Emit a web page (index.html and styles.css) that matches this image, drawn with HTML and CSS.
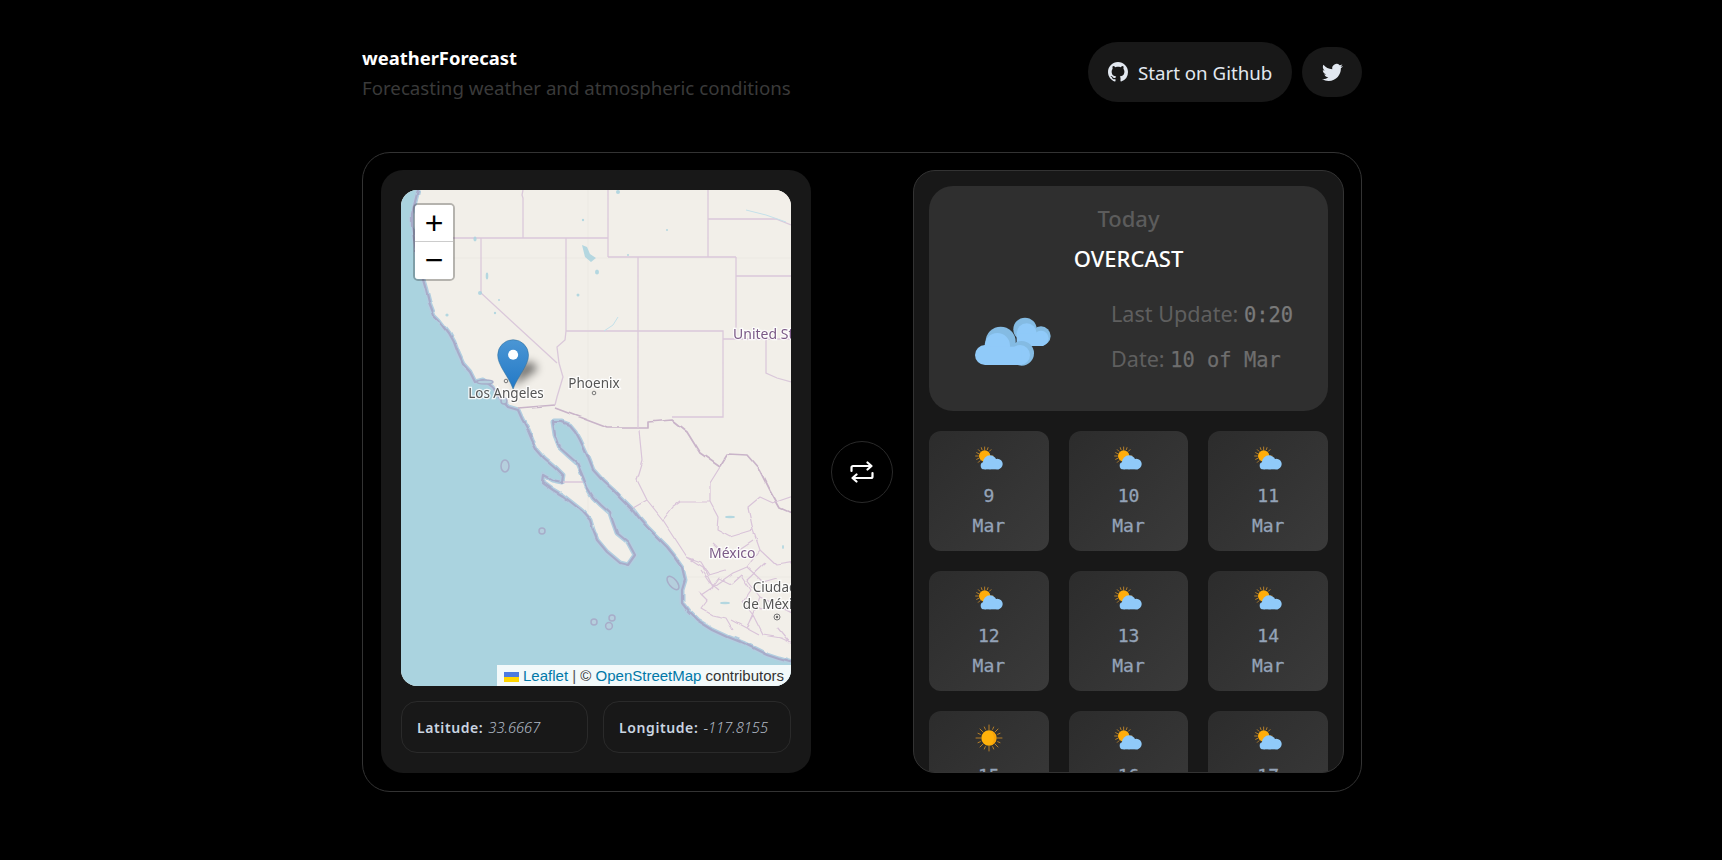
FILE: index.html
```html
<!DOCTYPE html>
<html lang="en">
<head>
<meta charset="utf-8">
<title>weatherForecast</title>
<link rel="stylesheet" href="styles.css">
</head>
<body>
<svg class="defs" width="0" height="0" aria-hidden="true">
  <defs>
    <symbol id="partly" viewBox="193 80 84 72">
      <g stroke="#f9a825" stroke-width="2" stroke-linecap="round">
        <path d="M222 83v8M222 129v8M195 110h8M241 110h6M203 91l5 5M236 124l5 5M241 91l-5 5M203 129l5-5M212 85l2 6M232 85l-2 6M198 100l6 3M198 120l6-3"/>
      </g>
      <circle cx="222" cy="110" r="17" fill="#ffad0a"/>
      <g fill="#90caf9">
        <circle cx="238" cy="129" r="21"/>
        <circle cx="260" cy="134" r="16"/>
        <circle cx="221" cy="139" r="11"/>
        <rect x="221" y="128" width="44" height="22"/>
      </g>
    </symbol>
    <symbol id="sun" viewBox="193 103 84 84">
      <g stroke="#f9a825" stroke-width="2" stroke-linecap="round">
        <path d="M235 106v14M235 170v14M196 145h14M260 145h14M208 118l8 8M254 164l8 8M262 118l-8 8M208 172l8-8M221 112l3 7M249 112l-3 7M221 178l3-7M249 178l-3-7M202 131l7 3M268 131l-7 3M202 159l7-3M268 159l-7-3"/>
      </g>
      <circle cx="235" cy="145" r="23" fill="#ffb10a"/>
      <path d="M240 123a23 23 0 0 1 0 44a30 30 0 0 0 0-44z" fill="#f7a30a"/>
    </symbol>
    <filter id="rough" x="-5%" y="-5%" width="110%" height="110%">
      <feTurbulence type="fractalNoise" baseFrequency="0.06" numOctaves="2" seed="4" result="n"/>
      <feDisplacementMap in="SourceGraphic" in2="n" scale="3.5" xChannelSelector="R" yChannelSelector="G"/>
    </filter>
  </defs>
</svg>

<div class="page">
  <header class="top">
    <div class="brand">
      <h1 class="brand-title">weatherForecast</h1>
      <p class="brand-sub">Forecasting weather and atmospheric conditions</p>
    </div>
    <div class="actions">
      <a class="btn btn-github">
        <svg class="gh-icon" viewBox="0 0 16 16"><path fill="currentColor" d="M8 0C3.58 0 0 3.58 0 8c0 3.54 2.29 6.53 5.47 7.59.4.07.55-.17.55-.38 0-.19-.01-.82-.01-1.49-2.01.37-2.53-.49-2.69-.94-.09-.23-.48-.94-.82-1.13-.28-.15-.68-.52-.01-.53.63-.01 1.08.58 1.23.82.72 1.21 1.87.87 2.33.66.07-.52.28-.87.51-1.07-1.78-.2-3.64-.89-3.64-3.95 0-.87.31-1.59.82-2.15-.08-.2-.36-1.02.08-2.12 0 0 .67-.21 2.2.82.64-.18 1.32-.27 2-.27.68 0 1.36.09 2 .27 1.53-1.04 2.2-.82 2.2-.82.44 1.1.16 1.92.08 2.12.51.56.82 1.27.82 2.15 0 3.07-1.87 3.75-3.65 3.95.29.25.54.73.54 1.48 0 1.07-.01 1.93-.01 2.2 0 .21.15.46.55.38A8.013 8.013 0 0016 8c0-4.42-3.58-8-8-8z"/></svg>
        <span>Start on Github</span>
      </a>
      <a class="btn btn-twitter">
        <svg class="tw-icon" viewBox="0 0 24 24"><path fill="currentColor" d="M23.953 4.57a10 10 0 01-2.825.775 4.958 4.958 0 002.163-2.723c-.951.555-2.005.959-3.127 1.184a4.92 4.92 0 00-8.384 4.482C7.69 8.095 4.067 6.13 1.64 3.162a4.822 4.822 0 00-.666 2.475c0 1.71.87 3.213 2.188 4.096a4.904 4.904 0 01-2.228-.616v.06a4.923 4.923 0 003.946 4.827 4.996 4.996 0 01-2.212.085 4.936 4.936 0 004.604 3.417 9.867 9.867 0 01-6.102 2.105c-.39 0-.779-.023-1.17-.067a13.995 13.995 0 007.557 2.209c9.053 0 13.998-7.496 13.998-13.985 0-.21 0-.42-.015-.63A9.935 9.935 0 0024 4.59z"/></svg>
      </a>
    </div>
  </header>

  <main class="shell">
    <section class="map-panel">
      <div class="map">
        <svg class="tiles" viewBox="0 0 390 496" width="390" height="496">
          <rect width="390" height="496" fill="#f2efe9"/>
          <path class="seam" d="M187 0V496M0 387H390M0 68H390"/>
          <g filter="url(#rough)">
            <path class="water" d="M-10 -10L17 -10L17 0L14 12L11 24L11 36L14 55L17 72L21 86L25 100L28 112L33 125L38 130L48 143L53 152L57 163L62 174L69 182L74 192L82 190L92 197L97 206L107 217L117 220L121 229L126 238L131 250L136 260L143 268L149 273L156 279L162 285L161 292L151 290L142 285L141 292L152 300L162 306L171 313L181 321L189 330L192 340L196 350L206 362L219 373L227 375L234 365L227 352L216 343L212 332L209 323L200 315L192 307L186 297L182 287L176 273L168 266L159 258L154 245L152 232L161 232L169 235L174 241L179 250L186 265L192 280L202 291L212 300L222 310L232 320L239 329L246 337L256 347L266 357L274 367L281 377L284 390L281 400L281 413L288 422L296 430L312 440L327 447L342 453L354 459L366 465L378 469L400 475L400 506L-10 506Z"/>
            <path class="coast" d="M17 0L14 12L11 24L11 36L14 55L17 72L21 86L25 100L28 112L33 125L38 130L48 143L53 152L57 163L62 174L69 182L74 192L82 190L92 197L97 206L107 217L117 220L121 229L126 238L131 250L136 260L143 268L149 273L156 279L162 285L161 292L151 290L142 285L141 292L152 300L162 306L171 313L181 321L189 330L192 340L196 350L206 362L219 373L227 375L234 365L227 352L216 343L212 332L209 323L200 315L192 307L186 297L182 287L176 273L168 266L159 258L154 245L152 232L161 232L169 235L174 241L179 250L186 265L192 280L202 291L212 300L222 310L232 320L239 329L246 337L256 347L266 357L274 367L281 377L284 390L281 400L281 413L288 422L296 430L312 440L327 447L342 453L354 459L366 465L378 469L400 475"/>
            <path class="border" d="M117 218L154 215M154 218L207 238H247V232L271 230L286 242L299 263L319 277L327 264L346 265L359 280L369 300L379 318L395 325"/>
            <path class="mx" d="M239 240L242 270L236 290L246 310L262 330L272 317L279 312L309 312L309 293L319 277M246 310L232 318M262 330L275 350L286 367L302 377L312 397M309 312L317 327L316 340L329 347L352 340L347 317L359 307L372 313L395 305M352 340L359 360L346 377L332 383L312 397L300 405M359 360L375 375L395 372M309 400L318 388L330 394L340 385L350 400L342 412L352 425L345 438M298 402L306 410L300 418L312 425L325 428L332 440M345 410L360 420L375 415L395 425M352 425L362 445L380 448L395 455M300 380L308 392L318 400M346 377L362 392L376 388M330 430L345 438L358 445M312 353L325 365L340 358L352 350M364 373L346 390L359 407L346 437M359 407L376 415L389 420M376 437L389 453M286 367L300 372L308 385L325 380"/>
          </g>
          <g class="isle">
            <ellipse cx="104" cy="276" rx="4" ry="6"/>
            <circle cx="141" cy="341" r="3"/>
            <circle cx="193" cy="432" r="3"/>
            <circle cx="211" cy="428" r="3"/>
            <circle cx="208" cy="436" r="3.4"/>
            <ellipse cx="272" cy="393" rx="4" ry="8" transform="rotate(-40 272 393)"/>
            <ellipse cx="84" cy="192" rx="8" ry="2"/>
            <circle cx="103" cy="211" r="3"/>
          </g>
          <path class="states" d="M122 0L121 5L122 8V48M52 48H207M207 0V67M207 67H335M307 0V67M307 29H375L390 35M335 67V149M335 86H390M237 67V238M165 48V141L164 150L156 157L158 173L162 187L156 207L154 215M80 48V103L156 173M165 141H322V227H271M322 149H390M365 149V183L376 188L390 192M162 292H182"/>
          <g class="lake">
            <path d="M181 55L186 57L189 64L195 68L190 72L184 67Z"/>
            <ellipse cx="74" cy="49" rx="1.6" ry="2.4"/>
            <ellipse cx="86" cy="86" rx="1.3" ry="3.4"/>
            <circle cx="79" cy="103" r="2"/>
            <ellipse cx="196" cy="82" rx="2" ry="2.6"/>
            <circle cx="177" cy="105" r="1.5"/>
            <circle cx="98" cy="110" r="1"/>
            <circle cx="94" cy="123" r="1.2"/>
            <circle cx="46" cy="125" r="1.6"/>
            <circle cx="182" cy="30" r="1.2"/>
            <circle cx="217" cy="2" r="2"/>
            <circle cx="266" cy="40" r="1"/>
            <circle cx="227" cy="65" r="1"/>
            <ellipse cx="324" cy="413" rx="5" ry="1.2"/>
            <ellipse cx="329" cy="327" rx="5" ry="1.2"/>
            <ellipse cx="382" cy="357" rx="1" ry="2"/>
          </g>
          <path class="river" d="M203 141L212 135L217 127M345 20L365 25L385 32"/>
          <g class="dots">
            <circle cx="105" cy="191" r="1.8"/>
            <circle cx="193" cy="203" r="1.8"/>
            <circle cx="376" cy="427" r="3"/>
          </g>
          <circle cx="376" cy="427" r="1.2" fill="#666"/>
          <text class="lbl" x="105" y="208">Los Angeles</text>
          <text class="lbl" x="193" y="198">Phoenix</text>
          <text class="lbl-region" x="332" y="149">United States</text>
          <text class="lbl-region" x="308" y="368">México</text>
          <text class="lbl" x="374" y="402">Ciudad</text>
          <text class="lbl" x="374" y="419">de México</text>
        </svg>
        <svg class="marker" viewBox="340 110 170 170">
          <defs>
            <linearGradient id="pin" x1="0" y1="0" x2="0" y2="1">
              <stop offset="0" stop-color="#4b96d4"/>
              <stop offset="1" stop-color="#2379c6"/>
            </linearGradient>
            <filter id="soft" x="-60%" y="-60%" width="220%" height="220%"><feGaussianBlur stdDeviation="13"/></filter>
          </defs>
          <path d="M400 258L474 206L458 184L420 190Z" fill="#000" opacity=".5" filter="url(#soft)"/>
          <path d="M400 265C385 225 354 195 354 164A46 46 0 1 1 446 164C446 195 415 225 400 265Z" fill="url(#pin)" stroke="#2e6c97" stroke-width="1.5"/>
          <circle cx="400" cy="163" r="15" fill="#fff"/>
        </svg>
        <div class="zoom-ctl">
          <a class="zoom-btn zoom-in">+</a>
          <a class="zoom-btn">&#x2212;</a>
        </div>
        <div class="attrib"><svg class="flag" viewBox="0 0 15 10"><rect width="15" height="5" fill="#4c7be1"/><rect y="5" width="15" height="5" fill="#ffd500"/></svg> <a class="attrib-link">Leaflet</a> <span class="attrib-sep">|</span> © <a class="attrib-link">OpenStreetMap</a> contributors</div>
      </div>
      <div class="coords">
        <div class="coord"><b class="coord-key">Latitude:</b> <i class="coord-val">33.6667</i></div>
        <div class="coord"><b class="coord-key">Longitude:</b> <i class="coord-val">-117.8155</i></div>
      </div>
    </section>

    <div class="swap-col">
      <button class="swap" type="button">
        <svg viewBox="0 0 24 22" width="24" height="22" fill="none" stroke="#fff" stroke-width="2.2" stroke-linecap="round" stroke-linejoin="round"><path d="M1.500 10V6.500a1.500 1.500 0 0 1 1.500-1.500H21M17.500 1.500L21.500 5L17.500 8.500M22.500 12V15.500a1.500 1.500 0 0 1-1.500 1.500H3M6.500 13.500L2.500 17L6.500 20.500"/></svg>
      </button>
    </div>

    <section class="forecast">
      <div class="today">
        <h2 class="today-label">Today</h2>
        <h3 class="today-cond">OVERCAST</h3>
        <div class="today-row">
          <svg class="today-icon" viewBox="177 390 270 219">
            <circle cx="345" cy="478" r="35" fill="#84bbe3"/>
            <circle cx="393" cy="498" r="29" fill="#84bbe3"/>
            <circle cx="350" cy="490" r="30" fill="#90caf9"/>
            <circle cx="393" cy="505" r="23" fill="#90caf9"/>
            <rect x="320" y="490" width="80" height="38" fill="#90caf9"/>
            <circle cx="272" cy="515" r="45" fill="#84bbe3"/>
            <circle cx="335" cy="550" r="37" fill="#84bbe3"/>
            <circle cx="262" cy="527" r="38" fill="#90caf9"/>
            <circle cx="330" cy="555" r="30" fill="#90caf9"/>
            <circle cx="225" cy="555" r="30" fill="#90caf9"/>
            <rect x="225" y="530" width="110" height="55" fill="#90caf9"/>
          </svg>
          <div class="today-meta">
            <p class="meta-line">Last Update: <span class="mono mono-bright">0:20</span></p>
            <p class="meta-line">Date: <span class="mono">10 of Mar</span></p>
          </div>
        </div>
      </div>
      <div class="days">
        <article class="day"><div class="day-icon"><svg class="ico-partly"><use href="#partly"/></svg></div><div class="day-num">9</div><div class="day-mon">Mar</div></article>
        <article class="day"><div class="day-icon"><svg class="ico-partly"><use href="#partly"/></svg></div><div class="day-num">10</div><div class="day-mon">Mar</div></article>
        <article class="day"><div class="day-icon"><svg class="ico-partly"><use href="#partly"/></svg></div><div class="day-num">11</div><div class="day-mon">Mar</div></article>
        <article class="day"><div class="day-icon"><svg class="ico-partly"><use href="#partly"/></svg></div><div class="day-num">12</div><div class="day-mon">Mar</div></article>
        <article class="day"><div class="day-icon"><svg class="ico-partly"><use href="#partly"/></svg></div><div class="day-num">13</div><div class="day-mon">Mar</div></article>
        <article class="day"><div class="day-icon"><svg class="ico-partly"><use href="#partly"/></svg></div><div class="day-num">14</div><div class="day-mon">Mar</div></article>
        <article class="day"><div class="day-icon"><svg class="ico-sun"><use href="#sun"/></svg></div><div class="day-num">15</div><div class="day-mon">Mar</div></article>
        <article class="day"><div class="day-icon"><svg class="ico-partly"><use href="#partly"/></svg></div><div class="day-num">16</div><div class="day-mon">Mar</div></article>
        <article class="day"><div class="day-icon"><svg class="ico-partly"><use href="#partly"/></svg></div><div class="day-num">17</div><div class="day-mon">Mar</div></article>
      </div>
    </section>
  </main>
</div>
</body>
</html>
```
FILE: styles.css
```css
* { box-sizing: border-box; }
html, body { margin: 0; padding: 0; height: 100%; overflow: hidden; }
body { background: #000; font-family: "Noto Sans", "Open Sans", sans-serif; color: #e2e8f0; }
.defs { position: absolute; }
.page { width: 1000px; margin-left: 362px; padding-top: 42px; }

.top { display: flex; justify-content: space-between; align-items: flex-start; height: 60px; margin-bottom: 50px; }
.brand { padding-top: 2px; }
.brand-title { margin: 0; font-size: 18.4px; line-height: 28px; font-weight: 700; color: #fff; }
.brand-sub { margin: 2px 0 0; font-size: 18.7px; line-height: 28px; color: #3a3a3a; }
.actions { display: flex; gap: 10px; align-items: center; }
.btn { display: flex; align-items: center; background: #181818; color: #e2e8f0; }
.btn-github { width: 204px; height: 60px; border-radius: 30px; padding-left: 20px; gap: 10px; font-size: 18.7px; }
.gh-icon { width: 20px; height: 20px; }
.btn-twitter { width: 60px; height: 50px; border-radius: 25px; justify-content: center; }
.tw-icon { width: 21px; height: 21px; }

.shell { display: grid; grid-template-columns: 430px 1fr 431px; height: 640px; padding: 17px 17px 18px 18px; border: 1px solid #333; border-radius: 28px; }

.map-panel { background: #181818; border-radius: 22px; padding: 20px 20px 19px; display: flex; flex-direction: column; gap: 15px; }
.map { position: relative; width: 390px; height: 496px; border-radius: 16px; overflow: hidden; background: #f2efe9; }
.tiles { display: block; filter: blur(0.45px); }
.seam { fill: none; stroke: #000; stroke-opacity: .025; stroke-width: 1; }
.water { fill: #aad3df; stroke: #b2cee0; stroke-width: 5; stroke-linejoin: round; }
.coast { fill: none; stroke: #a8abc9; stroke-width: 2.2; stroke-linejoin: round; }
.isle { fill: #b5cfdd; stroke: #a7adc9; stroke-width: 1.5; }
.states { fill: none; stroke: #dac8da; stroke-width: 1.3; }
.border { fill: none; stroke: #c9b4c9; stroke-width: 1.7; stroke-linejoin: round; }
.mx { fill: none; stroke: #d9c4d9; stroke-width: 1.2; stroke-linejoin: round; }
.lake { fill: #aad3df; opacity: .85; }
.river { fill: none; stroke: #c4e1ea; stroke-width: 1; }
.dots { fill: #f2efe9; stroke: #777; stroke-width: 1; }
.lbl, .lbl-region { font-family: "Noto Sans", sans-serif; font-size: 13.5px; text-anchor: middle; paint-order: stroke; stroke: rgba(255,255,255,.85); stroke-width: 2.5px; fill: #555; }
.lbl-region { fill: #7b5a87; text-anchor: start; font-size: 14px; }

.marker { position: absolute; left: 92px; top: 147px; width: 57px; height: 57px; overflow: visible; }
.zoom-ctl { position: absolute; left: 12px; top: 13px; width: 42px; border: 2px solid rgba(0,0,0,.25); border-radius: 5px; background-clip: padding-box; }
.zoom-btn { display: block; width: 38px; height: 37px; background: #fff; color: #000; text-align: center; font: 32px/36px "Liberation Sans", sans-serif; }
.zoom-btn:first-child { border-radius: 3px 3px 0 0; }
.zoom-btn:last-child { border-radius: 0 0 3px 3px; }
.zoom-in { border-bottom: 1px solid #ccc; }
.attrib { position: absolute; right: 0; bottom: 0; height: 21px; padding: 0 7px; white-space: nowrap; background: rgba(255,255,255,.85); color: #333; font: 15px/21px "Liberation Sans", sans-serif; }
.flag { display: inline-block; width: 15px; height: 10px; vertical-align: -1px; }
.attrib-link { color: #0078a8; }
.attrib-sep { color: #555; }

.coords { display: grid; grid-template-columns: 187px 188px; gap: 15px; }
.coord { height: 52px; border: 1px solid #2a2a2a; border-radius: 16px; padding-left: 15px; display: flex; align-items: center; gap: 5px; font-size: 14px; }
.coord-key { font-weight: 600; color: #cbd5e1; letter-spacing: .6px; }
.coord-val { color: #b0b8c4; font-weight: 300; font-size: 14.7px; }

.swap-col { display: flex; align-items: center; justify-content: center; }
.swap { display: flex; align-items: center; justify-content: center; width: 62px; height: 62px; padding: 0; border: 1px solid #2a2a2a; border-radius: 50%; background: #000; }

.forecast { border: 1px solid #333; border-radius: 22px; background: #181818; padding: 15px; overflow: hidden; }
.today { height: 225px; border-radius: 24px; background: #2f2f2f; padding-top: 18px; text-align: center; }
.today-label { margin: 0; font-size: 22px; line-height: 28px; font-weight: 500; color: #5c5c5c; }
.today-cond { margin: 12px 0 0; font-size: 22px; line-height: 28px; font-weight: 500; color: #fff; }
.today-row { display: flex; margin-top: 28px; padding-left: 40px; text-align: left; }
.today-icon { width: 90px; height: 73px; flex: none; }
.today-meta { margin-left: 52px; display: flex; flex-direction: column; gap: 16px; }
.meta-line { margin: 0; font-size: 21.6px; line-height: 28px; color: #5f5f5f; white-space: pre; }
.mono { font-family: "DejaVu Sans Mono", "Liberation Mono", monospace; font-size: 20.4px; color: #6e6e6e; -webkit-text-stroke: .25px currentColor; }
.mono-bright { color: #7a7a7a; }

.days { display: grid; grid-template-columns: repeat(3, 1fr); grid-auto-rows: 120px; gap: 20px; margin-top: 20px; }
.day { display: flex; flex-direction: column; align-items: center; padding-top: 15px; border-radius: 12px; background: linear-gradient(135deg, #2c2c2c, #3a3a3a); font-family: "DejaVu Sans Mono", "Liberation Mono", monospace; font-size: 18px; line-height: 28px; color: #94a3b8; -webkit-text-stroke: .3px currentColor; }
.day-icon { height: 24px; display: flex; align-items: center; justify-content: center; }
.ico-partly { width: 28px; height: 24px; flex: none; }
.ico-sun { width: 28px; height: 28px; flex: none; }
.day-num { margin-top: 12px; }
.day-mon { margin-top: 2px; }
```
